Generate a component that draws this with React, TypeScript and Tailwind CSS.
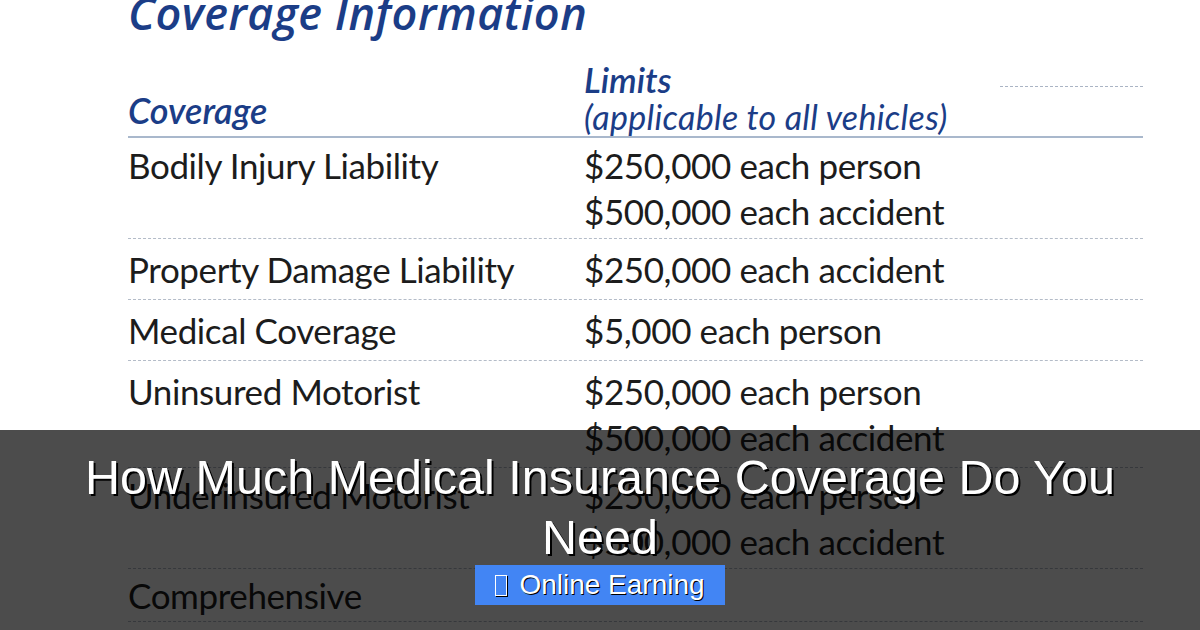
import React from 'react';

type Row = { name: string; limits: string[]; pad: string };

const rows: Row[] = [
  { name: 'Bodily Injury Liability', limits: ['$250,000 each person', '$500,000 each accident'], pad: 'py-[4px]' },
  { name: 'Property Damage Liability', limits: ['$250,000 each accident'], pad: 'py-[7px]' },
  { name: 'Medical Coverage', limits: ['$5,000 each person'], pad: 'py-[7px]' },
  { name: 'Uninsured Motorist', limits: ['$250,000 each person', '$500,000 each accident'], pad: 'py-[7px]' },
  { name: 'Underinsured Motorist', limits: ['$250,000 each person', '$500,000 each accident'], pad: 'py-[4px]' },
  { name: 'Comprehensive', limits: [], pad: 'py-[3px]' },
];

export default function App() {
  return (
    <div className="relative w-[1200px] h-[630px] overflow-hidden bg-white">
      {/* scanned coverage table */}
      <div className="pl-[128px] pr-[57px] font-['Lato','Open_Sans',sans-serif]">
        <h1 className="mt-[-13px] font-['Open_Sans',sans-serif] text-[45px] leading-[52px] font-semibold italic text-[#1b3d87] tracking-[0.5px]">
          Coverage Information
        </h1>
        <div className="flex items-end border-b-2 border-[#a9b8cc] mt-[21px]">
          <div className="w-[456px] mb-[7px] text-[36px] leading-[38px] italic font-semibold text-[#1b3d87]">
            Coverage
          </div>
          <div className="flex-1 relative text-[#1b3d87] italic">
            <div className="text-[35px] leading-[38px] font-semibold">Limits</div>
            <div className="text-[34px] leading-[38px] tracking-[0.3px]">(applicable to all vehicles)</div>
            <div className="absolute right-0 top-[26px] w-[143px] border-t border-dashed border-[#aab4c4]" />
          </div>
        </div>
        {rows.map((r) => (
          <div
            key={r.name}
            className={`flex border-b border-dashed border-[#b4bcc8] text-[35px] leading-[46px] text-[#1c1c1c] tracking-[-0.4px] ${r.pad}`}
          >
            <div className="w-[456px]">{r.name}</div>
            <div className="flex-1">
              {r.limits.map((l) => (
                <div key={l}>{l}</div>
              ))}
            </div>
          </div>
        ))}
      </div>

      {/* dark caption overlay */}
      <div className="absolute left-0 right-0 top-[430px] bottom-0 bg-black/70 flex flex-col items-center pt-[17px] font-['Liberation_Sans',Arial,sans-serif]">
        <h2 className="text-white text-[48.5px] leading-[60px] text-center px-[80px] [text-shadow:2px_2px_0_#000]">
          How Much Medical Insurance Coverage Do You Need
        </h2>
        <div className="mt-[-2px] h-[40px] px-[20px] bg-[#4285f4] flex items-center gap-[12px] text-white text-[28px] [text-shadow:1px_1px_0_#000]">
          <span className="inline-block w-[12px] h-[21px] border border-white [box-shadow:1px_1px_0_#000]" />
          <span>Online Earning</span>
        </div>
      </div>
    </div>
  );
}
